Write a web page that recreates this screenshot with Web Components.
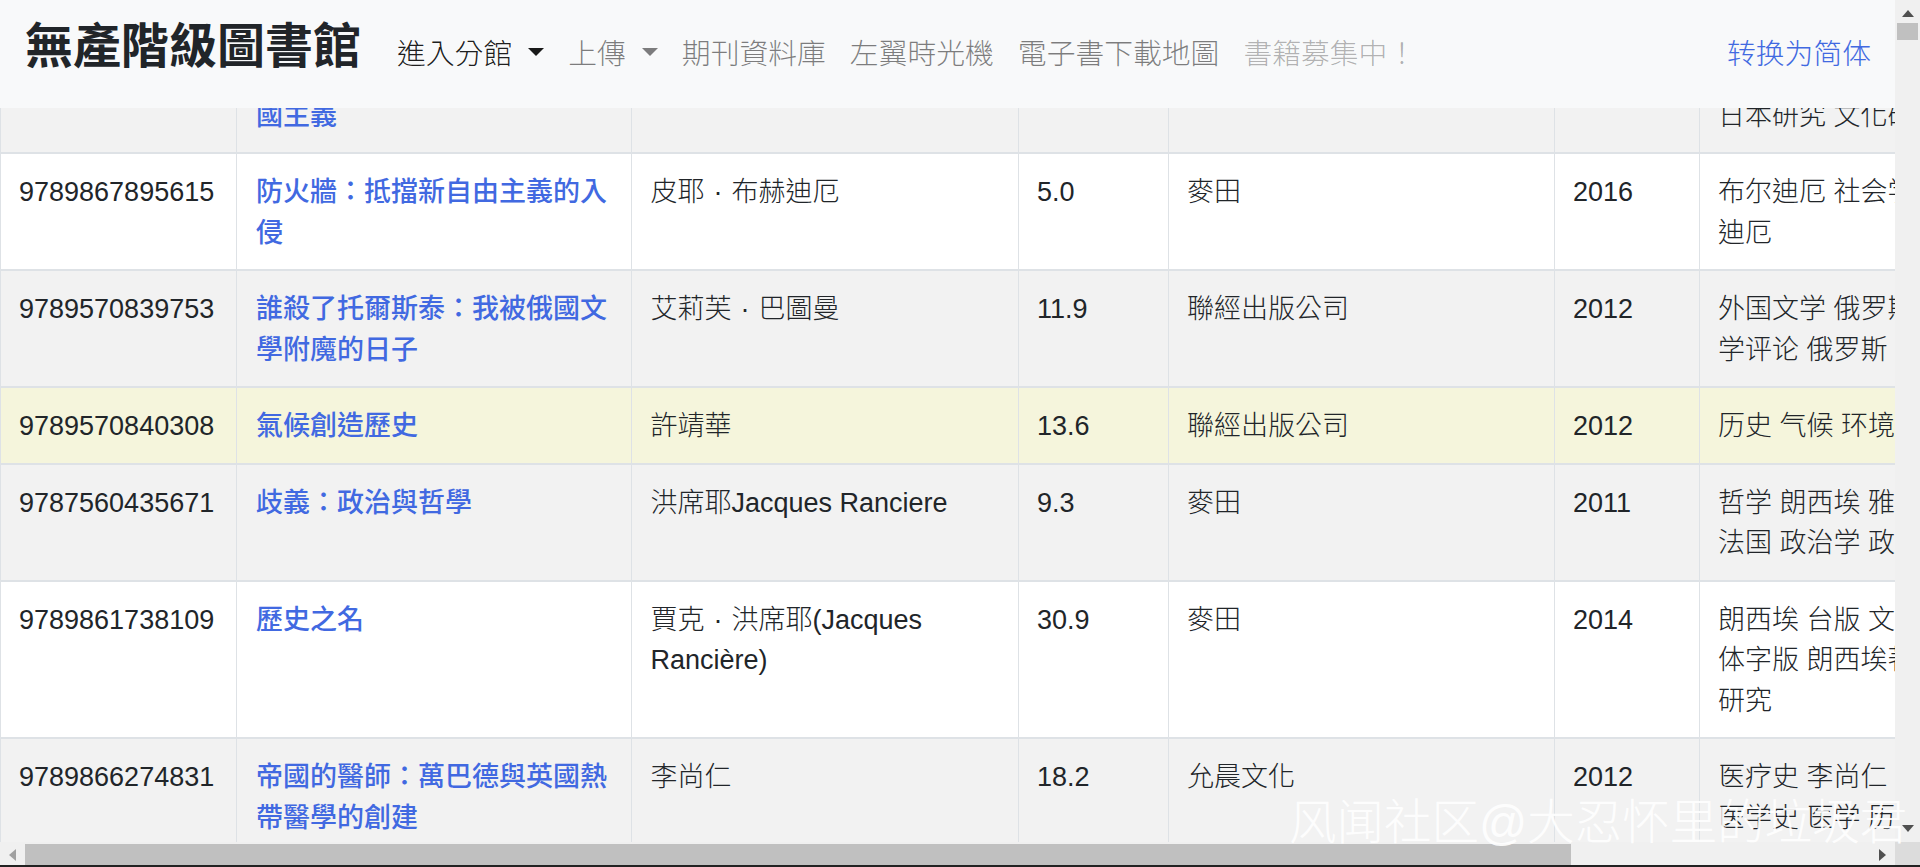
<!DOCTYPE html>
<html lang="zh-Hant">
<head>
<meta charset="utf-8">
<title>無產階級圖書館</title>
<style>
  html, body { margin: 0; height: 100%; overflow: hidden; }
  body { font-family: "Liberation Sans", "Noto Sans CJK TC", sans-serif; color: #212529; background: #000; }
</style>
</head>
<body>
<library-page>
  <library-nav slot="nav"></library-nav>
  <book-table slot="table"></book-table>
</library-page>
<script>
const FONT = '"Liberation Sans", "Noto Sans CJK TC", sans-serif';
const DOT = '<span class="dot">·</span>';

// tags are split by line: the last column runs past the right edge and gets clipped
const BOOKS = [
  { isbn: '', title: '&nbsp;<br>國主義', author: '', price: '', pub: '', year: '', tags: ['&nbsp;', '日本研究 文化研究'], striped: true },
  { isbn: '9789867895615', title: '防火牆：抵擋新自由主義的入侵', author: `皮耶${DOT}布赫迪厄`, price: '5.0', pub: '麥田', year: '2016', tags: ['布尔迪厄 社会学 布尔', '迪厄'] },
  { isbn: '9789570839753', title: '誰殺了托爾斯泰：我被俄國文學附魔的日子', author: `艾莉芙${DOT}巴圖曼`, price: '11.9', pub: '聯經出版公司', year: '2012', tags: ['外国文学 俄罗斯文', '学评论 俄罗斯'], striped: true },
  { isbn: '9789570840308', title: '氣候創造歷史', author: '許靖華', price: '13.6', pub: '聯經出版公司', year: '2012', tags: ['历史 气候 环境史'], tint: true },
  { isbn: '9787560435671', title: '歧義：政治與哲學', author: '洪席耶Jacques Ranciere', price: '9.3', pub: '麥田', year: '2011', tags: ['哲学 朗西埃 雅克', '法国 政治学 政治'], striped: true },
  { isbn: '9789861738109', title: '歷史之名', author: `賈克${DOT}洪席耶(Jacques Rancière)`, price: '30.9', pub: '麥田', year: '2014', tags: ['朗西埃 台版 文学', '体字版 朗西埃著', '研究'] },
  { isbn: '9789866274831', title: '帝國的醫師：萬巴德與英國熱帶醫學的創建', author: '李尚仁', price: '18.2', pub: '允晨文化', year: '2012', tags: ['医疗史 李尚仁', '医学史 医学 历史'], striped: true }
];

class LibraryPage extends HTMLElement {
  constructor() {
    super();
    this.shadow = this.attachShadow({ mode: 'open' });
  }
  connectedCallback() {
    this.shadow.innerHTML = /*html*/`
    <style>
      :host { display: grid; grid-template-columns: 1895px 25px; grid-template-rows: 842px 23px 2px; height: 867px; position: relative; overflow: hidden; }
      .view { overflow: hidden; background: #fff; }
      .vbar { background: #f0f0f0; display: flex; flex-direction: column; align-items: center; justify-content: space-between; padding: 10px 0 10px; box-sizing: border-box; }
      .vthumb { width: 21px; height: 17px; background: #c0c0c0; margin-top: 3px; }
      .vstack { display: flex; flex-direction: column; align-items: center; gap: 3px; }
      .up { width: 0; height: 0; border: 6px solid transparent; border-top: 0; border-bottom: 7px solid #505050; }
      .down { width: 0; height: 0; border: 6px solid transparent; border-bottom: 0; border-top: 7px solid #505050; }
      .hbar { background: #f0f0f0; padding-top: 2px; display: grid; grid-template-columns: 25px 1546px 1fr 25px; box-sizing: border-box; }
      .hthumb { background: #c0c0c0; }
      .cell { display: flex; align-items: center; justify-content: center; }
      .left { width: 0; height: 0; border: 6px solid transparent; border-left: 0; border-right: 7px solid #a0a0a0; }
      .right { width: 0; height: 0; border: 6px solid transparent; border-right: 0; border-left: 7px solid #505050; }
      .corner { background: #dcdcdc; }
      .edge { grid-column: 1 / -1; background: #222; }
      .mark { position: absolute; left: 1289px; top: 795px; font: 300 47.5px/56px ${FONT}; color: rgba(255,255,255,.92); white-space: nowrap; pointer-events: none; }
    </style>
    <div class="view"><slot name="nav"></slot><slot name="table"></slot></div>
    <div class="vbar">
      <div class="vstack"><div class="up"></div><div class="vthumb"></div></div>
      <div class="down"></div>
    </div>
    <div class="hbar">
      <div class="cell"><div class="left"></div></div>
      <div class="hthumb"></div>
      <div></div>
      <div class="cell"><div class="right"></div></div>
    </div>
    <div class="corner"></div>
    <div class="edge"></div>
    <div class="mark">风闻社区@大忍怀里的垃圾君</div>
    `;
  }
}

class LibraryNav extends HTMLElement {
  constructor() {
    super();
    this.shadow = this.attachShadow({ mode: 'open' });
  }
  connectedCallback() {
    this.shadow.innerHTML = /*html*/`
    <style>
      :host { display: flex; align-items: flex-start; height: 108px; background: #f8f9fa; position: relative; z-index: 2; padding: 0 24px 0 25px; box-sizing: border-box; font-family: ${FONT}; font-weight: 300; }
      .brand { font-size: 48px; line-height: 60px; font-weight: 700; color: #212529; margin-top: 17px; margin-right: 24px; white-space: nowrap; }
      ul { display: flex; list-style: none; margin: 34px 0 0; padding: 0; flex: 1; }
      li { font-size: 28.8px; line-height: 40px; padding: 0 12px; color: rgba(0,0,0,.5); white-space: nowrap; display: flex; align-items: center; }
      li.active { color: rgba(0,0,0,.9); }
      li.off { color: rgba(0,0,0,.3); }
      .caret { display: inline-block; width: 0; height: 0; margin: -4px 0 0 16px; border-top: 8px solid currentColor; border-left: 8.5px solid transparent; border-right: 8.5px solid transparent; }
      .switch { color: #4169e1; font-size: 28.8px; line-height: 40px; margin-top: 34px; white-space: nowrap; }
    </style>
    <div class="brand">無產階級圖書館</div>
    <ul>
      <li class="active">進入分館<span class="caret"></span></li>
      <li>上傳<span class="caret"></span></li>
      <li>期刊資料庫</li>
      <li>左翼時光機</li>
      <li>電子書下載地圖</li>
      <li class="off">書籍募集中！</li>
    </ul>
    <div class="switch">转换为简体</div>
    `;
  }
}

class BookTable extends HTMLElement {
  constructor() {
    super();
    this.shadow = this.attachShadow({ mode: 'open' });
  }
  connectedCallback() {
    const rows = BOOKS.map(b => /*html*/`
      <tr class="${b.striped ? 'striped' : ''} ${b.tint ? 'tint' : ''}">
        <td>${b.isbn}</td>
        <td><a>${b.title}</a></td>
        <td>${b.author}</td>
        <td>${b.price}</td>
        <td>${b.pub}</td>
        <td>${b.year}</td>
        <td class="tags">${b.tags.join('<br>')}</td>
      </tr>`).join('');
    this.shadow.innerHTML = /*html*/`
    <style>
      :host { display: block; margin-top: -73px; width: 2100px; font-family: ${FONT}; font-size: 27px; font-weight: 300; line-height: 40.5px; color: #212529; }
      table { border-collapse: collapse; table-layout: fixed; width: 1950px; }
      td { border: 1px solid #dee2e6; border-top-width: 2px; padding: 18px 18px 16px; vertical-align: top; box-sizing: border-box; }
      td:nth-child(2) { padding-left: 19px; }
      td:nth-child(3) { padding-left: 18.5px; }
      .tags { white-space: nowrap; }
      .dot { display: inline-block; width: 27px; text-align: center; }
      tr.striped td { background: #f2f2f2; }
      tr.tint td { background: #f5f5dc; }
      a { color: #4169e1; font-weight: 500; }
    </style>
    <table>
      <colgroup>
        <col style="width:236px"><col style="width:395px"><col style="width:387px"><col style="width:150px"><col style="width:386px"><col style="width:145px"><col style="width:251px">
      </colgroup>
      <tbody>${rows}</tbody>
    </table>
    `;
  }
}

customElements.define('library-page', LibraryPage);
customElements.define('library-nav', LibraryNav);
customElements.define('book-table', BookTable);
</script>
</body>
</html>
